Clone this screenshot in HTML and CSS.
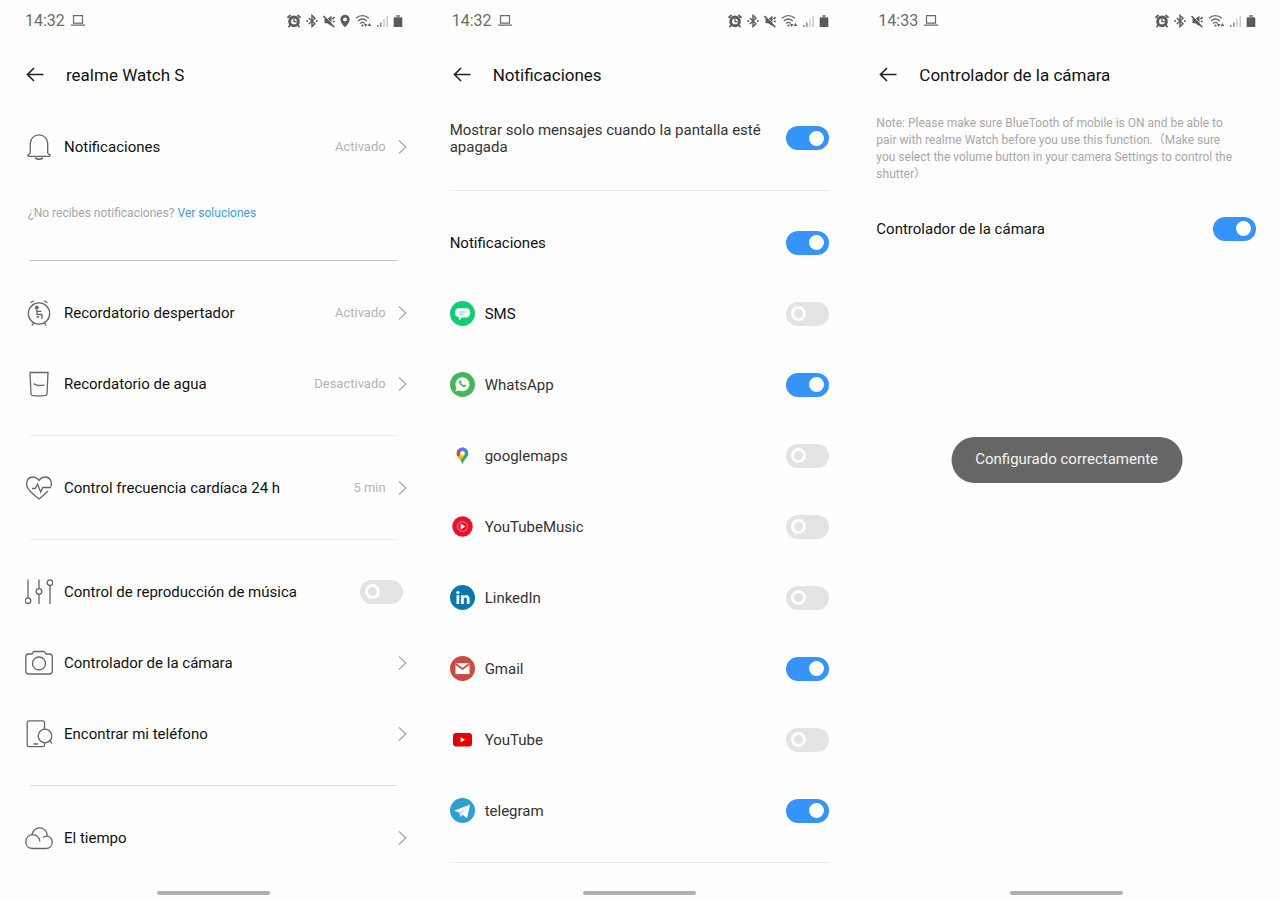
FILE: index.html
```html
<!DOCTYPE html>
<html lang="es">
<head>
<meta charset="utf-8">
<meta name="viewport" content="width=device-width, initial-scale=1">
<title>realme Watch S</title>
<link rel="stylesheet" href="styles.css">
</head>
<body>
<svg class="sprite" aria-hidden="true">
  <symbol id="laptop" viewBox="0 0 14 11"><path d="M2.500.700h9v7.500h-9zM0 10.200h14" fill="none" stroke="#6b6b6b" stroke-width="1.200"/></symbol>
  <symbol id="alarm" viewBox="0 0 14 14"><path d="M.5 3.800 3.600 1M13.500 3.800 10.400 1M3.200 11 1.400 13.200M10.800 11l1.800 2.200" stroke="#5c5c5c" stroke-width="1.700"/><circle cx="7" cy="7.400" r="5.800" fill="#5c5c5c"/><circle cx="7" cy="7.400" r="2.900" fill="#fff"/><path d="M7 4.500v3.100h2.600" fill="none" stroke="#5c5c5c" stroke-width="1.300"/></symbol>
  <symbol id="bluetooth" viewBox="0 0 12 14"><path d="m2.800 4 6.200 5.800L6 12.600V1.400l3 2.800L2.800 10" fill="none" stroke="#5c5c5c" stroke-width="1.400"/><circle cx="1.200" cy="7" r="1" fill="#5c5c5c"/><circle cx="10.800" cy="7" r="1" fill="#5c5c5c"/></symbol>
  <symbol id="mute" viewBox="0 0 12 14"><path d="M1.500 5h2.800L8.500 1.800v10.400L4.300 9.200H1.500z" fill="#5c5c5c"/><path d="m1.500 1.500 10 10.500" stroke="#fff" stroke-width=".9"/><path d="m.5 2 10.800 11.200M9.500 5.300 11.500 3M9.800 7.500h2" stroke="#5c5c5c" stroke-width="1.600"/></symbol>
  <symbol id="pin" viewBox="0 0 10 14"><path fill-rule="evenodd" d="M5 .8a4.700 4.700 0 0 0-4.700 4.700C.3 9 5 13.300 5 13.300S9.700 9 9.700 5.500A4.700 4.700 0 0 0 5 .8zm0 2.700a1.900 1.900 0 1 1 0 3.800 1.900 1.900 0 0 1 0-3.800z" fill="#5c5c5c"/></symbol>
  <symbol id="wifi" viewBox="0 0 17 14"><path d="M1 4.300c3.800-3.500 9-3.500 12.800 0M3 6.900c2.600-2.300 6.200-2.300 8.800 0M5 9.400c1.500-1.300 3.300-1.300 4.800 0" fill="none" stroke="#6b6b6b" stroke-width="1.300"/><circle cx="7.500" cy="11.500" r="1.100" fill="#5c5c5c"/><path d="m9 10 1.700 3 1.700-3zM12.600 12l1.800-3 1.800 3z" fill="#5c5c5c"/></symbol>
  <symbol id="signal" viewBox="0 0 11 14"><path d="M.8 13v-2M3.800 13V8.500" stroke="#777" stroke-width="1.300"/><path d="M7 13V5M10.200 13V2" stroke="#c4c4c4" stroke-width="1.300"/></symbol>
  <symbol id="battery" viewBox="0 0 10 14"><path d="M3.200 1h3.600v2H9v1.500H1V3h2.200z" fill="#8c8c8c"/><path d="M.7 4h8.600v9H.7z" fill="#5a5a5a"/></symbol>
  <symbol id="back" viewBox="0 0 18 16"><path d="M17.500 7.500H1.500M8 1 1.500 7.500 8 14" fill="none" stroke="#222" stroke-width="1.600"/></symbol>
  <symbol id="chevron" viewBox="0 0 9 16"><path d="m1 1.500 6.800 6.500L1 14.500" fill="none" stroke="#a9a9a9" stroke-width="1.300"/></symbol>
</svg>

<main class="screens">
  <section class="screen">
    <div class="status">
      <span class="time">14:32</span><svg class="laptop"><use href="#laptop"/></svg>
      <div class="tray">
        <svg class="w14"><use href="#alarm"/></svg><svg class="w12"><use href="#bluetooth"/></svg><svg class="w12"><use href="#mute"/></svg><svg class="w10"><use href="#pin"/></svg><svg class="w17"><use href="#wifi"/></svg><svg class="w11"><use href="#signal"/></svg><svg class="w10"><use href="#battery"/></svg>
      </div>
    </div>
    <header class="bar"><button class="back" aria-label="Atrás"><svg><use href="#back"/></svg></button><h1>realme Watch S</h1></header>
    <div class="menu">
      <a class="row" href="#notificaciones">
        <svg class="glyph" viewBox="0 0 28 28"><path d="M5.300 20V10.500a8.700 8.700 0 0 1 17.400 0V20c.8 1.200 2.500 1.800 2.500 2.500 0 .5-.4.800-1 .8H3.800c-.6 0-1-.3-1-.8 0-.7 1.700-1.300 2.500-2.500z"/><path d="M10 25c2.500 1.500 5.500 1.500 8 0" stroke-width="1.600"/></svg>
        <span class="label">Notificaciones</span><span class="value">Activado</span><svg class="chevron"><use href="#chevron"/></svg>
      </a>
      <p class="help">¿No recibes notificaciones? <a href="#soluciones">Ver soluciones</a></p>
      <hr class="strong">
      <a class="row" href="#despertador">
        <svg class="glyph" viewBox="0 0 28 28"><circle cx="14" cy="14.500" r="10.700"/><path d="M5.500 3.800 9 1.800M22.500 3.800 19 1.800M8.500 24 7 26.500M19.500 24l1.500 2.500M12 11v4.500h5V20M12 12.300h4.500M11.500 18h2.500"/><circle cx="11.800" cy="8.800" r="1.300" fill="#666"/></svg>
        <span class="label">Recordatorio despertador</span><span class="value">Activado</span><svg class="chevron"><use href="#chevron"/></svg>
      </a>
      <a class="row" href="#agua">
        <svg class="glyph" viewBox="0 0 28 28"><path d="M5 2.500h18l-1 21.500c0 .8-.4 1.200-1.200 1.400-4.500.7-9.100.7-13.600 0C6.400 25.200 6 24.800 6 24zM8.500 13.800c2 0 3 1.700 5.500 1.700 2 0 3-.3 5.500-.3"/></svg>
        <span class="label">Recordatorio de agua</span><span class="value">Desactivado</span><svg class="chevron"><use href="#chevron"/></svg>
      </a>
      <hr>
      <a class="row" href="#frecuencia">
        <svg class="glyph" viewBox="0 0 28 28"><path d="M26 12.500c1.700-5-1.500-9.500-5.500-9.500-3 0-5 1.500-6.500 3.500C12.500 4.500 10.500 3 7.500 3 3.500 3 .3 7.500 2 12.500 3.500 17 9.500 21.500 14 25c3-2.300 6-4.800 9-8M7 14.500h3.200l2.300-4.500 3.200 8 2-4.500H26"/></svg>
        <span class="label">Control frecuencia cardíaca 24 h</span><span class="value">5 min</span><svg class="chevron"><use href="#chevron"/></svg>
      </a>
      <hr>
      <label class="row">
        <svg class="glyph" viewBox="0 0 28 28"><path d="M3 1.500v18M14 1.500v9M14 16.500V26M25 7.500V26"/><circle cx="3" cy="22.700" r="2.800"/><circle cx="14" cy="13.500" r="2.800"/><circle cx="25" cy="4.700" r="2.800"/></svg>
        <span class="label">Control de reproducción de música</span><input class="switch inset" type="checkbox" role="switch">
      </label>
      <a class="row" href="#camara">
        <svg class="glyph" viewBox="0 0 28 28"><path d="M3.500 5H7l1.200-2c.2-.3.500-.5 1-.5h9.600c.5 0 .8.200 1 .5L21 5h3.500c1.700 0 2.800 1 2.800 2.700v14.600c0 1.700-1.100 2.700-2.800 2.700h-21C1.800 25 .8 24 .8 22.300V7.700C.8 6 1.800 5 3.500 5z"/><circle cx="14" cy="14.500" r="6.500"/></svg>
        <span class="label">Controlador de la cámara</span><svg class="chevron"><use href="#chevron"/></svg>
      </a>
      <a class="row" href="#telefono">
        <svg class="glyph" viewBox="0 0 28 28"><path d="M19.500 9V2.500c0-1-.7-1.700-1.700-1.700H4C3 .8 2.200 1.500 2.200 2.500V25c0 1 .8 1.700 1.800 1.700h13.800c1 0 1.700-.7 1.700-1.700v-2.300M8.500 24H13M25 20.800l2 2.700"/><circle cx="20" cy="16" r="6.800"/></svg>
        <span class="label">Encontrar mi teléfono</span><svg class="chevron"><use href="#chevron"/></svg>
      </a>
      <hr class="medium">
      <a class="row" href="#tiempo">
        <svg class="glyph" viewBox="0 0 28 28"><path d="M7 10.800a7.600 7.600 0 0 1 15.200 1.400c2.900.5 5 2.900 5 6 0 3.700-2.700 6.300-6.500 6.300H8c-4.200 0-7.200-2.600-7.200-6.600 0-4.300 3.200-7.300 7-7.300 4 0 7 3 7 7M18 13.500c1.200-.9 2.600-1.400 4.200-1.300"/></svg>
        <span class="label">El tiempo</span><svg class="chevron"><use href="#chevron"/></svg>
      </a>
    </div>
    <div class="home"></div>
  </section>

  <section class="screen">
    <div class="status">
      <span class="time">14:32</span><svg class="laptop"><use href="#laptop"/></svg>
      <div class="tray">
        <svg class="w14"><use href="#alarm"/></svg><svg class="w12"><use href="#bluetooth"/></svg><svg class="w12"><use href="#mute"/></svg><svg class="w17"><use href="#wifi"/></svg><svg class="w11"><use href="#signal"/></svg><svg class="w10"><use href="#battery"/></svg>
      </div>
    </div>
    <header class="bar"><button class="back" aria-label="Atrás"><svg><use href="#back"/></svg></button><h1>Notificaciones</h1></header>
    <div class="apps">
      <label class="row intro"><span class="label soft">Mostrar solo mensajes cuando la pantalla esté apagada</span><input class="switch" type="checkbox" role="switch" checked></label>
      <hr>
      <label class="row"><span class="label">Notificaciones</span><input class="switch" type="checkbox" role="switch" checked></label>
      <label class="row">
        <svg class="logo" viewBox="0 0 25 25"><circle cx="12.500" cy="12.500" r="12.500" fill="#15cc73"/><path d="M8.500 7.200h8c2.200 0 3.700 1.800 3.700 4.500s-1.500 4.700-3.700 4.700h-4L8.800 19l.2-2.700c-2.300 0-4-1.800-4-4.600s1.300-4.500 3.500-4.500z" fill="#fff"/><path d="M9 11h7M9 13.200h4" stroke="#6fdfaa" stroke-width="1.100"/></svg>
        <span class="label">SMS</span><input class="switch" type="checkbox" role="switch">
      </label>
      <label class="row">
        <svg class="logo" viewBox="0 0 25 25"><circle cx="12.500" cy="12.500" r="12.500" fill="#43b854"/><path d="M5.300 19.600 6.500 16a7 7 0 1 1 2.700 2.500z" fill="#fff"/><path d="M9.800 8.600c-1.300 1.200-.7 3 1 4.700s4 2.600 5 .9c.4-.8.200-1-.4-1.300-.9-.5-1.100-.5-1.700.4-1.200-.3-2.400-1.500-2.700-2.500.7-.6.700-.9.200-2-.4-.6-.8-.7-1.400-.2z" fill="#43b854"/></svg>
        <span class="label soft">WhatsApp</span><input class="switch" type="checkbox" role="switch" checked>
      </label>
      <label class="row">
        <svg class="logo" viewBox="0 0 25 25"><clipPath id="drop"><path d="M12.500 4.500a5.800 5.800 0 0 0-5.800 5.800c0 4.200 4.300 5.600 5.300 10.200h1c1-4.600 5.300-6 5.300-10.200a5.800 5.800 0 0 0-5.800-5.800z"/></clipPath><g clip-path="url(#drop)"><path d="M6 3h13v18H6z" fill="#34a853"/><path d="M6 3h13v4l-6.500 4L6 9z" fill="#4285f4"/><path d="m6 4 6.500 6L6 17z" fill="#ea4335"/><path d="m6 16 6.500-7 2 3.500-5 6.500z" fill="#fbbc04"/></g><circle cx="12.500" cy="10.200" r="2.300" fill="#fff"/></svg>
        <span class="label soft">googlemaps</span><input class="switch" type="checkbox" role="switch">
      </label>
      <label class="row">
        <svg class="logo" viewBox="0 0 25 25"><circle cx="12.500" cy="12.500" r="10.200" fill="#e8102a"/><circle cx="12.500" cy="12.500" r="5" fill="none" stroke="#f7a0aa" stroke-width=".9"/><path d="m10.700 9.500 4.600 3-4.600 3z" fill="#fff"/></svg>
        <span class="label soft">YouTubeMusic</span><input class="switch" type="checkbox" role="switch">
      </label>
      <label class="row">
        <svg class="logo" viewBox="0 0 25 25"><circle cx="12.500" cy="12.500" r="12.500" fill="#0a77b0"/><circle cx="7.900" cy="7.600" r="1.600" fill="#fff"/><path d="M6.500 10.200h2.800V19H6.500zM11 10.200h2.600v1.200c1.700-2.300 6-1.700 6 2.500V19h-2.800v-4.500c0-2.600-3-2.500-3 0V19H11z" fill="#fff"/></svg>
        <span class="label soft">LinkedIn</span><input class="switch" type="checkbox" role="switch">
      </label>
      <label class="row">
        <svg class="logo" viewBox="0 0 25 25"><circle cx="12.500" cy="12.500" r="12.500" fill="#cc4a40"/><path d="M5.500 7.200h14v10.900h-14z" fill="#fff"/><path d="m5.500 7.700 7 5.200 7-5.200" fill="none" stroke="#cc4a40" stroke-width="1.700"/></svg>
        <span class="label soft">Gmail</span><input class="switch" type="checkbox" role="switch" checked>
      </label>
      <label class="row">
        <svg class="logo" viewBox="0 0 25 25"><rect x="3" y="6" width="19" height="13.500" rx="3" fill="#e60000"/><path d="m10.700 10.200 4.500 2.500-4.500 2.600z" fill="#fff"/></svg>
        <span class="label soft">YouTube</span><input class="switch" type="checkbox" role="switch">
      </label>
      <label class="row">
        <svg class="logo" viewBox="0 0 25 25"><circle cx="12.500" cy="12.500" r="12.500" fill="#2ea0d0"/><path d="m4 12.700 15.500-6c.5 0 .6.300.5.800L17.300 19c-.2.700-.7.800-1.200.4l-3.700-2.700-2.200 2.400-.8-4.500z" fill="#fff"/><path d="m9.400 14.600 7.600-5.200-5.300 6.300-1.500 3.400z" fill="#c3dfee"/></svg>
        <span class="label soft">telegram</span><input class="switch" type="checkbox" role="switch" checked>
      </label>
      <hr>
    </div>
    <div class="home"></div>
  </section>

  <section class="screen">
    <div class="status">
      <span class="time">14:33</span><svg class="laptop"><use href="#laptop"/></svg>
      <div class="tray">
        <svg class="w14"><use href="#alarm"/></svg><svg class="w12"><use href="#bluetooth"/></svg><svg class="w12"><use href="#mute"/></svg><svg class="w17"><use href="#wifi"/></svg><svg class="w11"><use href="#signal"/></svg><svg class="w10"><use href="#battery"/></svg>
      </div>
    </div>
    <header class="bar"><button class="back" aria-label="Atrás"><svg><use href="#back"/></svg></button><h1>Controlador de la cámara</h1></header>
    <div class="camera">
      <p class="note">Note: Please make sure BlueTooth of mobile is ON and be able to pair with realme Watch before you use this function.（Make sure you select the volume button in your camera Settings to control the shutter）</p>
      <label class="row"><span class="label">Controlador de la cámara</span><input class="switch" type="checkbox" role="switch" checked></label>
    </div>
    <div class="toast" role="status">Configurado correctamente</div>
    <div class="home"></div>
  </section>
</main>
</body>
</html>
```
FILE: styles.css
```css
*, *::before { box-sizing: border-box; }
body {
  margin: 0;
  background: #fff;
  color: #111;
  font: 15px/17px Roboto, "Noto Sans CJK SC", sans-serif;
}
svg { display: block; flex: none; }
.sprite { position: absolute; width: 0; height: 0; }
.screens { display: grid; grid-template-columns: repeat(3, 1fr); min-height: 100vh; }
.screen { position: relative; display: flex; flex-direction: column; min-width: 0; background: #fefefe; }

.status { display: flex; align-items: center; height: 41px; padding: 0 24px 0 25px; color: #6b6b6b; }
.time { font-size: 16px; }
.laptop { width: 14px; height: 11px; margin-left: 6px; }
.tray { display: flex; gap: 5px; margin-left: auto; }
.tray svg { height: 14px; }
.w10 { width: 10px; }
.w11 { width: 11px; }
.w12 { width: 12px; }
.w14 { width: 14px; }
.w17 { width: 17px; }

.bar { display: flex; align-items: center; gap: 22px; height: 67px; padding: 0 26px; }
.back { padding: 0; border: 0; background: none; }
.back svg { width: 18px; height: 16px; }
h1 { margin: 0; font-size: 17px; line-height: 20px; font-weight: 400; }

.menu { padding: 3px 20px 0 25px; }
.apps { padding: 0 24px 0 23px; }
.camera { padding: 7px 24px 0 23px; }

.row { display: flex; align-items: center; height: 71px; color: inherit; text-decoration: none; }
.label { flex: 1; padding-top: 2px; }
.soft { color: #333; }
.glyph { width: 28px; height: 28px; margin-right: 11px; fill: none; stroke: #666; stroke-width: 1.3; }
.value { color: #b4b4b4; font-size: 13px; }
.chevron { width: 9px; height: 16px; margin-left: 12px; }
.logo { width: 25px; height: 25px; margin-right: 10px; }
.intro { height: 60px; margin-bottom: 22px; }
.intro .label { padding-right: 20px; }

.help { margin: 0; padding: 23px 3px 22px; color: #a6a6a6; font-size: 12px; }
.help a { color: #3b9ddd; text-decoration: none; }

hr { height: 1px; margin: 16px 0; border: 0; background: #ebebeb; }
.menu hr { margin: 16px 10px 16px 5px; }
.menu .strong { background: #c4c4c4; }
.menu .medium { background: #dedede; }

.switch {
  appearance: none;
  display: flex;
  align-items: center;
  flex: none;
  width: 43px;
  height: 24px;
  margin: 0;
  padding: 0 5px;
  border-radius: 12px;
  background: #e3e3e3;
}
.switch::before { content: ""; width: 15px; height: 15px; border: 3px solid #fff; border-radius: 50%; }
.switch:checked { justify-content: flex-end; background: #3494fa; }
.switch:checked::before { background: #fff; }
.inset { margin-right: 4px; }

.note { margin: 0 0 10px; padding-right: 16px; color: #a8a8a8; font-size: 12px; }

.toast {
  position: absolute;
  top: 51%;
  left: 50%;
  transform: translate(-50%, -50%);
  padding: 14px 24px 15px;
  border-radius: 23px;
  background: #666;
  color: #f4f4f4;
  white-space: nowrap;
}
.home { width: 113px; height: 4px; margin: auto auto 6px; border-radius: 2px; background: #b0b0b0; }
```
